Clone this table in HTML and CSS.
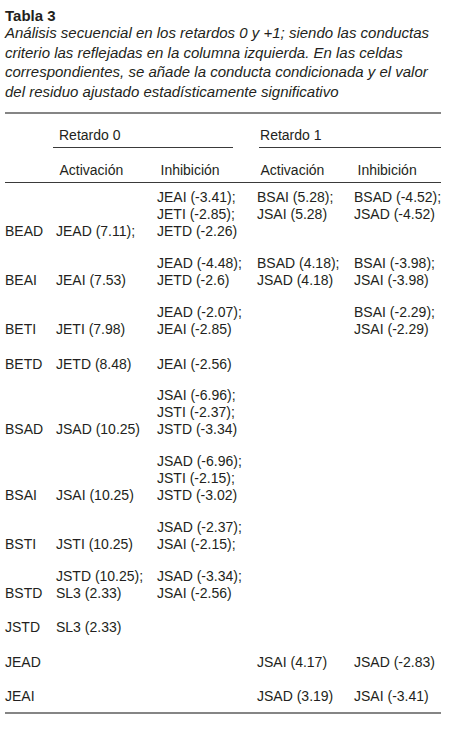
FILE: index.html
```html
<!DOCTYPE html>
<html lang="es">
<head>
<meta charset="utf-8">
<title>Tabla 3</title>
<link rel="stylesheet" href="styles.css">
</head>
<body>
<div class="page">
  <h1 class="title">Tabla 3</h1>
  <p class="caption">Análisis secuencial en los retardos 0 y +1; siendo las conductas criterio las reflejadas en la columna izquierda. En las celdas correspondientes, se añade la conducta condicionada y el valor del residuo ajustado estadísticamente significativo</p>
  <table class="data">
    <colgroup>
      <col class="c0"><col class="c1"><col class="c2"><col class="c3"><col class="c4">
    </colgroup>
    <thead>
      <tr class="group-row">
        <th></th>
        <th colspan="2"><div class="group g0">Retardo 0</div></th>
        <th colspan="2"><div class="group g1">Retardo 1</div></th>
      </tr>
      <tr class="sub-row">
        <th></th>
        <th>Activación</th>
        <th>Inhibición</th>
        <th>Activación</th>
        <th>Inhibición</th>
      </tr>
    </thead>
    <tbody>
      <tr class="first">
        <td>BEAD</td><td>JEAD (7.11);</td>
        <td>JEAI (-3.41);<br>JETI (-2.85);<br>JETD (-2.26)</td>
        <td>BSAI (5.28);<br>JSAI (5.28)</td>
        <td>BSAD (-4.52);<br>JSAD (-4.52)</td>
      </tr>
      <tr>
        <td>BEAI</td><td>JEAI (7.53)</td>
        <td>JEAD (-4.48);<br>JETD (-2.6)</td>
        <td>BSAD (4.18);<br>JSAD (4.18)</td>
        <td>BSAI (-3.98);<br>JSAI (-3.98)</td>
      </tr>
      <tr>
        <td>BETI</td><td>JETI (7.98)</td>
        <td>JEAD (-2.07);<br>JEAI (-2.85)</td>
        <td></td>
        <td>BSAI (-2.29);<br>JSAI (-2.29)</td>
      </tr>
      <tr class="single">
        <td>BETD</td><td>JETD (8.48)</td>
        <td>JEAI (-2.56)</td>
        <td></td><td></td>
      </tr>
      <tr>
        <td>BSAD</td><td>JSAD (10.25)</td>
        <td>JSAI (-6.96);<br>JSTI (-2.37);<br>JSTD (-3.34)</td>
        <td></td><td></td>
      </tr>
      <tr>
        <td>BSAI</td><td>JSAI (10.25)</td>
        <td>JSAD (-6.96);<br>JSTI (-2.15);<br>JSTD (-3.02)</td>
        <td></td><td></td>
      </tr>
      <tr>
        <td>BSTI</td><td>JSTI (10.25)</td>
        <td>JSAD (-2.37);<br>JSAI (-2.15);</td>
        <td></td><td></td>
      </tr>
      <tr>
        <td>BSTD</td><td>JSTD (10.25);<br>SL3 (2.33)</td>
        <td>JSAD (-3.34);<br>JSAI (-2.56)</td>
        <td></td><td></td>
      </tr>
      <tr class="single">
        <td>JSTD</td><td>SL3 (2.33)</td>
        <td></td><td></td><td></td>
      </tr>
      <tr class="single">
        <td>JEAD</td><td></td><td></td>
        <td>JSAI (4.17)</td>
        <td>JSAD (-2.83)</td>
      </tr>
      <tr class="single last">
        <td>JEAI</td><td></td><td></td>
        <td>JSAD (3.19)</td>
        <td>JSAI (-3.41)</td>
      </tr>
    </tbody>
  </table>
</div>
</body>
</html>
```

FILE: styles.css
```css
html, body {
  margin: 0;
  padding: 0;
  background: #ffffff;
}

.page {
  padding: 8px 13px 0 5px;
  font-family: "Liberation Sans", Arial, sans-serif;
  color: #231f20;
}

.title {
  margin: 0;
  font-size: 15px;
  line-height: 15px;
  font-weight: bold;
}

.caption {
  margin: 0 0 11px 0;
  font-size: 15px;
  line-height: 19.5px;
  font-style: italic;
}

.data {
  width: 436px;
  table-layout: fixed;
  border-collapse: collapse;
  border-top: 2px solid #858585;
  border-bottom: 2px solid #858585;
  font-size: 14px;
  line-height: 17px;
}

.c0 { width: 48px; }
.c1 { width: 101px; }
.c2 { width: 100px; }
.c3 { width: 97px; }
.c4 { width: 90px; }

.data th {
  font-weight: normal;
  text-align: left;
  vertical-align: bottom;
  padding: 0;
  white-space: nowrap;
}

.group-row th {
  padding-top: 12.65px;
}

.group {
  padding-bottom: 3.35px;
  border-bottom: 1px solid #3a3a3a;
}

.g0 {
  margin-right: 21px;
  padding-left: 6px;
}

.g1 {
  margin-left: 5px;
  padding-left: 1px;
}

.sub-row th {
  padding: 13.65px 0 3px 6.5px;
  border-bottom: 1px solid #3a3a3a;
}

.sub-row th:first-child {
  padding-left: 0;
}

.data td {
  padding: 14.8px 0 0 3px;
  vertical-align: top;
  white-space: nowrap;
}

.data td:first-child {
  padding-left: 0;
}

.data td:nth-child(1),
.data td:nth-child(2) {
  vertical-align: bottom;
}

.data tr.first td {
  padding-top: 6.7px;
}

.data tr.single td {
  padding-top: 17.6px;
}

.data tr.last td {
  padding-bottom: 6.5px;
}
```
